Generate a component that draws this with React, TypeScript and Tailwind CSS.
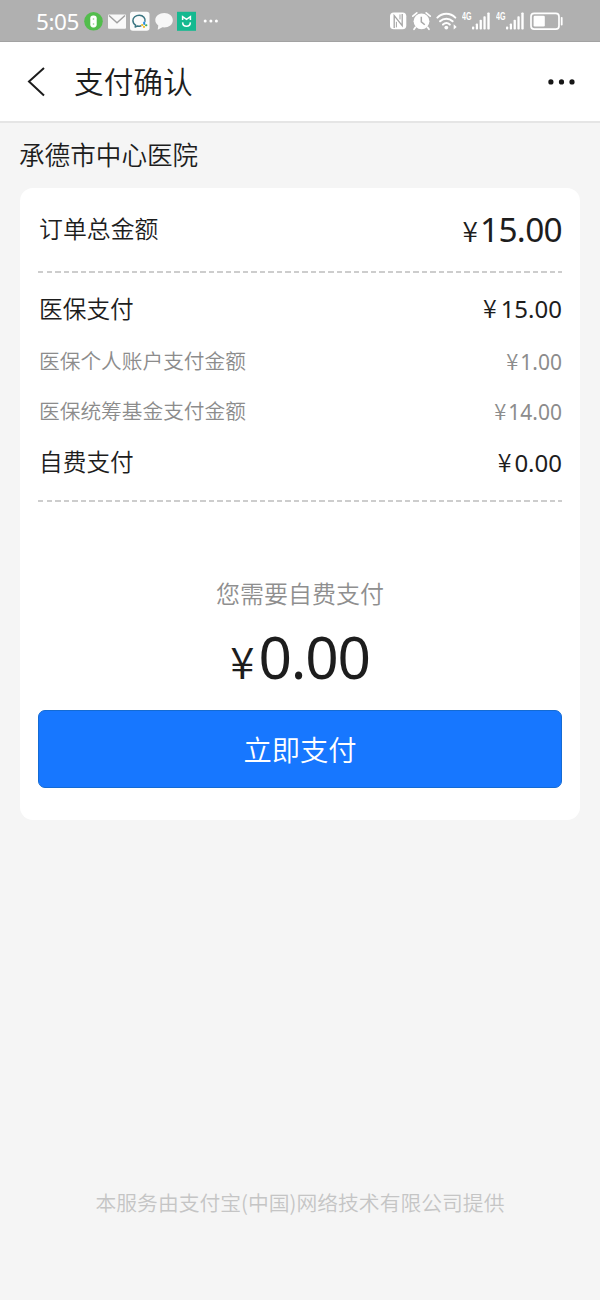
import type { ReactNode } from "react";

function Amount({ className, symbolClass, children }: { className: string; symbolClass: string; children: ReactNode }) {
  return (
    <div className={`flex items-baseline font-['Noto_Sans',sans-serif] font-normal ${className}`}>
      <span className={`font-['Noto_Sans_CJK_SC',sans-serif] font-[350] tracking-normal ${symbolClass}`}>¥</span>
      {children}
    </div>
  );
}

function Divider() {
  return (
    <div className="h-[2px] w-[524px] bg-[repeating-linear-gradient(90deg,#cdcdcd_0px,#cdcdcd_5.5px,transparent_5.5px,transparent_8.53px)]" />
  );
}

function SignalIcon() {
  return (
    <svg width="28" height="20" viewBox="0 0 28 20" fill="#fff">
      <text x="0" y="8.8" fontSize="10.5" fontWeight="700" fontFamily="Liberation Sans, sans-serif" textLength="9.5" lengthAdjust="spacingAndGlyphs">4G</text>
      <rect x="10" y="15.5" width="2.2" height="3" rx="0.8" />
      <rect x="13.8" y="12.5" width="2.2" height="6" rx="0.8" />
      <rect x="17.6" y="8.8" width="2.3" height="9.7" rx="0.8" />
      <rect x="21.4" y="5.3" width="2.3" height="13.2" rx="0.8" />
      <rect x="25.3" y="1.5" width="2.4" height="17" rx="0.8" />
    </svg>
  );
}

function StatusBar() {
  return (
    <div className="flex h-[42px] shrink-0 items-center border-b border-[#a2a2a2] bg-[#b0b0b0] pl-[36px] pr-[36px]">
      <span className="w-[48px] pt-[2px] font-['Noto_Sans',sans-serif] text-[22.5px] leading-[40px] font-normal tracking-[-0.02em] text-white">5:05</span>
      <svg className="mr-[4px]" width="20" height="20" viewBox="0 0 20 20">
        <circle cx="9.5" cy="10.3" r="9.3" fill="#52bd4c" />
        <rect x="6.3" y="4.4" width="6.4" height="12" rx="2.8" fill="#fff" />
        <path d="M9.5 6.9v2M9.5 11.9v2" stroke="#b5dfb1" strokeWidth="1.4" />
      </svg>
      <svg className="mr-[3px]" width="19" height="20" viewBox="0 0 19 20">
        <rect x="0" y="3.4" width="18" height="14.4" rx="1" fill="#f9f9f9" />
        <path d="M1 4.5l8 7.3 8-7.3" fill="none" stroke="#a0a0a0" strokeWidth="1.4" />
      </svg>
      <svg className="mr-[5px]" width="20" height="20" viewBox="0 0 20 20">
        <rect x="0" y="0.8" width="19.5" height="19" rx="2.8" fill="#fbfbfb" />
        <path d="M14.9 10.8c1-3.6-1.8-6.6-5.6-6.6-3.6 0-6.4 2.4-6.4 5.4 0 2 1.2 3.6 2.7 4.5l-.4 2 2.5-1.2c1.2.3 2.6.3 3.6-.1" fill="none" stroke="#3a7582" strokeWidth="1.5" strokeLinejoin="round" />
        <path d="M14.2 11.4v1.5" stroke="#268de2" strokeWidth="2" strokeLinecap="round" />
        <path d="M12.3 14h-.2M14 15.8v.2" stroke="#edbb30" strokeWidth="2.2" strokeLinecap="round" />
        <path d="M16 14.2h.4" stroke="#4bab58" strokeWidth="2" strokeLinecap="round" />
      </svg>
      <svg className="mr-[4px]" width="18" height="20" viewBox="0 0 18 20">
        <path d="M9.3 2.1C4.4 2.1.3 5 .3 9.1c0 2.3 1.1 4.2 3 5.4l-.6 4.3 4.7-2.5c5.8.7 10.4-2.4 10.4-7.1 0-4-3.7-7.1-8.5-7.1Z" fill="#f7f7f7" />
      </svg>
      <svg width="20" height="20" viewBox="0 0 20 20">
        <rect x="0" y="0.8" width="19" height="19" fill="#15b990" />
        <path d="M5.6 9V5.6l3.9 2.7 3.9-2.7V9" fill="none" stroke="#fff" strokeWidth="1.5" />
        <path d="M5.6 11.4c.2 2.7 1.4 3.9 3.9 3.9s3.7-1.2 3.9-3.9" fill="none" stroke="#fff" strokeWidth="1.5" />
      </svg>
      <svg className="ml-[6px]" width="17" height="20" viewBox="0 0 17 20" fill="#fff">
        <circle cx="2.2" cy="10" r="1.5" />
        <circle cx="7.9" cy="10" r="1.5" />
        <circle cx="13.4" cy="10" r="1.5" />
      </svg>
      <div className="ml-auto flex items-center">
        <svg className="mr-[5px]" width="17" height="20" viewBox="0 0 17 20">
          <rect x="0" y="1.4" width="16.3" height="16.8" rx="3.8" fill="#fff" />
          <path d="M4.2 17V4.6l8 10V3" fill="none" stroke="#a5a5a5" strokeWidth="1.3" />
          <path d="M6.4 16.4v-5.6M10 8.4V3.4" fill="none" stroke="#a5a5a5" strokeWidth="1" />
        </svg>
        <svg className="mr-[4px]" width="20" height="20" viewBox="0 0 20 20">
          <circle cx="9.5" cy="10.3" r="7.9" fill="#fff" />
          <path d="M.8 5.2l4-3.4M18.2 5.2l-4-3.4M3.4 16.3l-1.4 2M15.6 16.3l1.4 2" stroke="#fff" strokeWidth="1.7" strokeLinecap="round" />
          <path d="M9.3 5.8v5l3.5 3" fill="none" stroke="#aaa" strokeWidth="1.5" />
        </svg>
        <svg className="mr-[4px]" width="22" height="20" viewBox="0 0 22 20">
          <path d="M1.4 6.6c5-5.1 12.9-5.1 17.9 0M4.1 10.3c3.5-3.4 9-3.4 12.5 0M7 13.6c2-1.8 4.8-1.8 6.8 0" fill="none" stroke="#fff" strokeWidth="2" strokeLinecap="round" />
          <circle cx="10.3" cy="16.6" r="1.9" fill="#fff" />
          <path d="M17.7 13.2l3 2.7-3 2.7Z" fill="#fff" />
        </svg>
        <SignalIcon />
        <div className="w-[6px]" />
        <SignalIcon />
        <svg className="ml-[6px]" width="34" height="20" viewBox="0 0 34 20">
          <rect x="1" y="2.3" width="28" height="15.8" rx="3.2" fill="none" stroke="#fff" strokeWidth="1.7" />
          <rect x="3.6" y="4.8" width="11.2" height="10.8" rx="1.3" fill="#fff" />
          <rect x="30.8" y="6" width="1.8" height="8.5" rx="0.8" fill="#fff" />
        </svg>
      </div>
    </div>
  );
}

export default function App() {
  return (
    <div className="flex h-[1300px] w-[600px] flex-col overflow-hidden bg-[#f5f5f5] font-['Noto_Sans_CJK_SC',sans-serif] font-[350] text-[#1d1d1d]">
      <StatusBar />
      <header className="flex h-[81px] shrink-0 items-center border-b-2 border-[#e5e5e5] bg-white pl-[27px] pr-[24px]">
        <svg width="19" height="30" viewBox="0 0 19 30" fill="none" stroke="#1c1c1c" strokeWidth="2">
          <path d="M17 1L2 14.6L17 28.4" />
        </svg>
        <h1 className="mb-[2px] ml-[28px] text-[29.7px] leading-[44px] font-[350]">支付确认</h1>
        <svg className="ml-auto" width="28" height="8" viewBox="0 0 28 8" fill="#161616">
          <circle cx="2.9" cy="3.9" r="2.6" />
          <circle cx="13.5" cy="3.9" r="2.6" />
          <circle cx="24" cy="3.9" r="2.6" />
        </svg>
      </header>
      <h2 className="h-[65px] shrink-0 pl-[19px] text-[25.6px] leading-[62px] font-[350]">承德市中心医院</h2>
      <main className="mx-[20px] flex h-[632px] shrink-0 flex-col rounded-[13px] bg-white px-[18px]">
        <div className="flex h-[83px] items-center justify-between pb-[3px] pl-[1px]">
          <span className="text-[23.9px]">订单总金额</span>
          <Amount className="pt-[2px] text-[33.4px] tracking-[-0.02em]" symbolClass="mr-[2px] text-[28px]">15.00</Amount>
        </div>
        <Divider />
        <div className="flex h-[71px] items-center justify-between pl-[1px] text-[23.7px]">
          <span>医保支付</span>
          <Amount className="pb-[1px] text-[24px]" symbolClass="mr-[4px] text-[25px]">15.00</Amount>
        </div>
        <div className="flex h-[34px] items-center justify-between pl-[1px] text-[20.7px] text-[#8c8c8c]">
          <span>医保个人账户支付金额</span>
          <Amount className="text-[21px]" symbolClass="mr-[2px] text-[22px]">1.00</Amount>
        </div>
        <div className="mt-[16px] flex h-[34px] items-center justify-between pl-[1px] text-[20.7px] text-[#8c8c8c]">
          <span>医保统筹基金支付金额</span>
          <Amount className="text-[21px]" symbolClass="mr-[2px] text-[22px]">14.00</Amount>
        </div>
        <div className="flex h-[72px] items-center justify-between pb-[4px] pl-[1px] text-[23.7px]">
          <span>自费支付</span>
          <Amount className="pb-[1px] text-[24px]" symbolClass="mr-[3px] text-[25px]">0.00</Amount>
        </div>
        <Divider />
        <p className="mt-[73px] text-center text-[24px] leading-[36px] text-[#8f8f8f]">您需要自费支付</p>
        <Amount className="h-[99px] justify-center text-[58.5px] leading-[91px] tracking-[-0.02em]" symbolClass="mr-[4px] text-[44px]">0.00</Amount>
        <button className="h-[78px] w-[524px] rounded-[7px] border border-[#146bd4] bg-[#1777ff] text-[28.3px] text-white">立即支付</button>
      </main>
      <footer className="mt-auto h-[115px] shrink-0 text-center text-[20.8px] leading-[34px] text-[#c5c5c5]">
        本服务由支付宝(中国)网络技术有限公司提供
      </footer>
    </div>
  );
}
